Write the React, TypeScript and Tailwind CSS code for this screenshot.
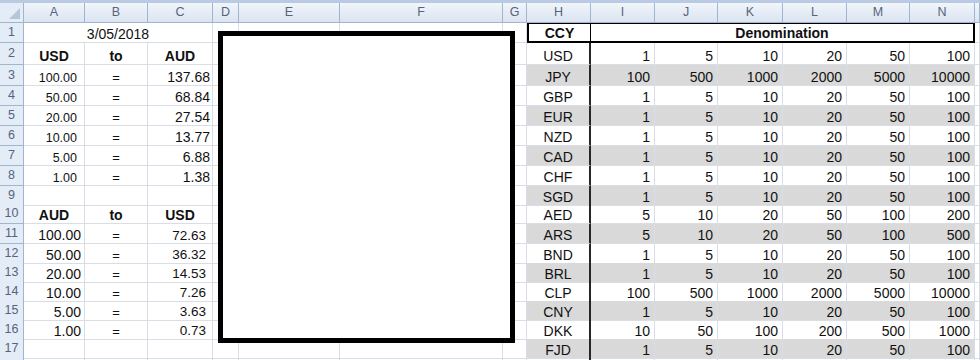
import React from 'react';

// column widths: row header, A..N, then the sliver past N
const GRID =
  'grid grid-cols-[24px_61px_63px_65px_26px_101px_163px_24px_64px_64px_63px_65px_64px_63px_65px_1fr]';
const COLS = ['A', 'B', 'C', 'D', 'E', 'F', 'G', 'H', 'I', 'J', 'K', 'L', 'M', 'N', ''];
const ROW_H = [
  'h-[20px]', 'h-[22px]', 'h-[21px]', 'h-[20px]', 'h-[20px]', 'h-[20px]', 'h-[20px]', 'h-[20px]', 'h-[18px]',
  'h-[20px]', 'h-[20px]', 'h-[19px]', 'h-[19px]', 'h-[19px]', 'h-[19px]', 'h-[19px]', 'h-[19px]', 'h-[19px]',
];

const USD_AUD = [['100.00', '137.68'], ['50.00', '68.84'], ['20.00', '27.54'], ['10.00', '13.77'], ['5.00', '6.88'], ['1.00', '1.38']];
const AUD_USD = [['100.00', '72.63'], ['50.00', '36.32'], ['20.00', '14.53'], ['10.00', '7.26'], ['5.00', '3.63'], ['1.00', '0.73']];

const STD = ['1', '5', '10', '20', '50', '100'];
const BIG = ['100', '500', '1000', '2000', '5000', '10000'];
const CCY: [string, string[]][] = [
  ['USD', STD], ['JPY', BIG], ['GBP', STD], ['EUR', STD], ['NZD', STD], ['CAD', STD], ['CHF', STD], ['SGD', STD],
  ['AED', ['5', '10', '20', '50', '100', '200']], ['ARS', ['5', '10', '20', '50', '100', '500']],
  ['BND', STD], ['BRL', STD], ['CLP', BIG], ['CNY', STD], ['DKK', ['10', '50', '100', '200', '500', '1000']], ['FJD', STD],
];

const CELL = 'flex items-end overflow-hidden whitespace-nowrap border-b border-r border-[#d8dde6] pb-[1px] leading-none text-[#111]';

const Cell = ({ text = '', cls = '' }: { text?: string; cls?: string }) => <div className={`${CELL} ${cls}`}>{text}</div>;

const Corner = () => (
  <div className="relative border-r border-b border-[#9eb6ce] bg-[#e4ecf7]">
    <svg className="absolute right-[3px] bottom-[3px]" width="11" height="11" viewBox="0 0 11 11">
      <polygon points="11,0 11,11 0,11" fill="#b6c6da" />
    </svg>
  </div>
);

const leftCells = (r: number) => {
  if (r === 1) {
    return <Cell text="3/05/2018" cls="col-span-3 justify-center text-[14px]" />;
  }
  if (r === 2 || r === 10) {
    const [a, c] = r === 2 ? ['USD', 'AUD'] : ['AUD', 'USD'];
    return (
      <>
        <Cell text={a} cls="justify-center text-[14px] font-bold" />
        <Cell text="to" cls="justify-center text-[14px] font-bold" />
        <Cell text={c} cls="justify-center text-[14px] font-bold" />
      </>
    );
  }
  if (r >= 3 && r <= 8) {
    const [a, c] = USD_AUD[r - 3];
    return (
      <>
        <Cell text={a} cls="justify-end pr-[7px] text-[12.5px]" />
        <Cell text="=" cls="justify-center text-[13px]" />
        <Cell text={c} cls="justify-end pr-[2px] text-[14px]" />
      </>
    );
  }
  if (r >= 11 && r <= 16) {
    const [a, c] = AUD_USD[r - 11];
    return (
      <>
        <Cell text={a} cls="justify-end pr-[3px] text-[14px]" />
        <Cell text="=" cls="justify-center text-[13px]" />
        <Cell text={c} cls="justify-end pr-[6px] text-[13.5px]" />
      </>
    );
  }
  return (
    <>
      <Cell />
      <Cell />
      <Cell />
    </>
  );
};

const rightCells = (r: number) => {
  if (r === 1) {
    return (
      <>
        <div className="flex items-end justify-center pb-[1px] leading-none text-[14px] font-bold text-[#111] border-t border-l-2 border-b-2 border-r border-black">
          CCY
        </div>
        <div className="col-span-6 flex items-end justify-center pb-[1px] leading-none text-[14px] font-bold text-[#111] border-t border-b-2 border-r-2 border-black">
          Denomination
        </div>
      </>
    );
  }
  const row = CCY[r - 2];
  if (!row) {
    return (
      <>
        <Cell cls="border-r-2 border-r-[#262626]" />
        {STD.map((_, i) => (
          <Cell key={i} />
        ))}
      </>
    );
  }
  const shade = r % 2 === 1 ? 'bg-[#d9d9d9]' : '';
  return (
    <>
      <Cell text={row[0]} cls={`justify-center text-[14px] border-r-2 border-r-[#262626] ${shade}`} />
      {row[1].map((v, i) => (
        <Cell key={i} text={v} cls={`justify-end pr-[4px] text-[14px] ${shade}`} />
      ))}
    </>
  );
};

export default function App() {
  return (
    <div className="relative h-[360px] w-[980px] overflow-hidden bg-white font-['Liberation_Sans',Arial,sans-serif]">
      <div className="h-[3px] bg-[#b9cbe2]" />
      {/* column letters */}
      <div className={`${GRID} h-[20px]`}>
        <Corner />
        {COLS.map((c, i) => (
          <div
            key={i}
            className="flex items-center justify-center border-r border-b border-[#9eb6ce] bg-linear-to-b from-[#f1f5fb] to-[#dbe4f1] text-[12.5px] text-[#56647a]"
          >
            {c}
          </div>
        ))}
      </div>

      {ROW_H.map((h, idx) => {
        const r = idx + 1;
        return (
          <div key={r} className={`${GRID} ${h}`}>
            {/* row 18 only peeks in at the bottom edge, so no number */}
            <div className="flex items-center justify-center border-r border-b border-[#9eb6ce] bg-[#e4ecf7] text-[12.5px] text-[#56647a]">
              {r < 18 ? r : ''}
            </div>
            {leftCells(r)}
            <Cell />
            <Cell />
            <Cell />
            <Cell />
            {rightCells(r)}
            <Cell />
          </div>
        );
      })}

      {/* drawn rectangle over D1:G17 */}
      <div className="absolute left-[218px] top-[31px] h-[312px] w-[297px] border-[5px] border-black bg-white" />
    </div>
  );
}
